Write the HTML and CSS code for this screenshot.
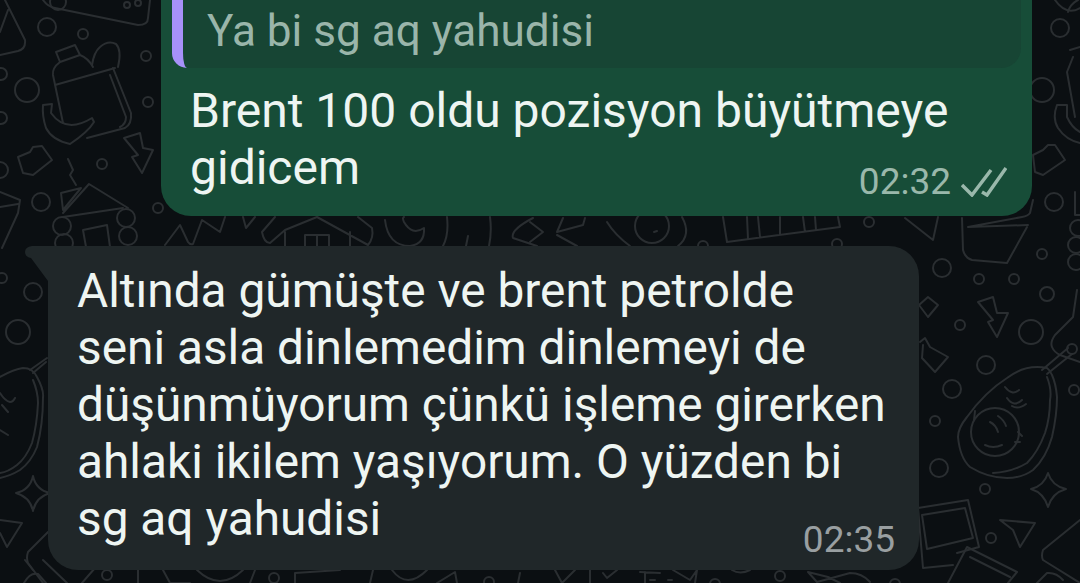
FILE: index.html

```html
<!DOCTYPE html>
<html lang="en">
  <head>
    <meta charset="UTF-8" />
    <title>Chat</title>
    <link rel="stylesheet" href="styles.css">
  </head>
  <body>
    <svg class="doodles" width="1080" height="583" viewBox="0 0 1080 583" fill="none">
      <g>
        <!-- small circles -->
        <circle cx="47" cy="27" r="9" /><circle cx="83" cy="34" r="5" /><circle cx="27" cy="90" r="12" />
        <circle cx="146" cy="56" r="5" /><circle cx="148" cy="102" r="5" /><circle cx="102" cy="164" r="5" />
        <circle cx="41" cy="202" r="9" /><circle cx="158" cy="208" r="5" /><circle cx="1" cy="118" r="6" />
        <circle cx="1" cy="74" r="6" /><circle cx="0" cy="170" r="8" /><circle cx="58" cy="2" r="8" />
        <circle cx="127" cy="5" r="3" /><circle cx="138" cy="3" r="3" />
        <circle cx="33" cy="292" r="9" /><circle cx="18" cy="332" r="12" /><circle cx="2" cy="278" r="5" />
        <circle cx="1060" cy="28" r="9" /><circle cx="1042" cy="90" r="12" /><circle cx="1054" cy="202" r="9" />
        <circle cx="869" cy="222" r="5" /><circle cx="942" cy="268" r="9" /><circle cx="1042" cy="254" r="5" />
        <circle cx="979" cy="279" r="5" /><circle cx="1014" cy="279" r="5" /><circle cx="837" cy="244" r="5" />
        <circle cx="703" cy="246" r="5" />
        <circle cx="960" cy="325" r="5" /><circle cx="1031" cy="332" r="12" /><circle cx="986" cy="365" r="9" />
        <circle cx="952" cy="389" r="9" /><circle cx="935" cy="421" r="5" /><circle cx="1074" cy="390" r="5" />
        <circle cx="939" cy="468" r="9" /><circle cx="985" cy="489" r="5" /><circle cx="991" cy="538" r="5" />
        <circle cx="1072" cy="349" r="5" /><circle cx="1047" cy="294" r="7" />
        <!-- top left shapes -->
        <path d="M5 0L25 40Q26 49 18 51L0 55M0 32L8 10" />
        <path d="M43 0Q48 7 55 8L138 25Q148 25 148 18L150 0" />
        <!-- bottle, bag, banana -->
        <path d="M56 52L75 45L80 55L60 62ZM60 62Q52 68 53 75L63 123M80 55Q88 58 93 67M55 85L115 68" />
        <path d="M92 65Q94 52 100 47Q108 40 116 44Q122 50 118 67" />
        <path d="M113 68L131 113Q132 124 125 128L87 138M110 75L126 117Q126 124 120 127" />
        <path d="M43 105L52 104L51 113Q66 134 92 118L94 122Q88 132 70 144Q52 140 46 128Q42 116 43 105Z" />
        <!-- box, lightning, squiggle -->
        <path d="M18 157L30 152L33 147L42 146L52 160L33 175L23 173Z" />
        <path d="M124 138L140 133L143 148L153 150L142 173L132 157L138 155Z" />
        <path d="M68 159L73 170L70 175L76 185" />
        <!-- log house -->
        <path d="M61 193L81 188L63 210ZM63 213L89 184L128 208M63 217L123 208M83 230L107 225L110 247M83 230L86 247" />
        <circle cx="62" cy="226" r="9" /><circle cx="126" cy="218" r="9" /><circle cx="128" cy="236" r="9" /><circle cx="64" cy="243" r="9" />
        <!-- bucket left -->
        <path d="M0 192L20 200L18 213L2 248M0 207L18 204" />
        <!-- avocado bottom left -->
        <path d="M30 370L47 358M33 373L46 362" />
        <path d="M0 377Q14 369 23 368Q33 368 37 377Q44 390 43 397Q43 425 37 447Q31 462 20 470Q10 476 0 478" />
        <path d="M33 380Q38 392 38 403Q37 425 32 443Q26 458 17 465Q8 472 0 473" />
        <path d="M0 393Q5 401 10 402Q13 402 15 398M2 405L8 412M0 430L8 435" />
        <path d="M33 476Q36 490 50 493Q36 497 33 511Q30 497 16 493Q30 490 33 476Z" />
        <path d="M0 520L22 523L7 547L0 533" />
        <path d="M48 532L28 552Q26 558 28 563L43 583" />
        <!-- right top -->
        <path d="M1070 50L1080 47M1073 57L1067 72L1075 117M1057 105L1067 105L1067 117Q1072 128 1080 132M1057 105Q1052 118 1058 128Q1066 140 1080 143" />
        <path d="M1033 155L1043 150L1048 145L1055 145L1065 160L1043 175L1035 172Z" />
        <path d="M1055 0Q1066 16 1080 8" />
        <path d="M1078 0Q1070 4 1068 12" />
        <!-- bucket right -->
        <path d="M962 218L963 250Q965 258 972 260L1007 263L1027 227M968 227L1028 225M1033 200L1030 213Q1028 216 1022 217L968 227" />
        <path d="M905 218L933 240L938 217" />
        <path d="M1075 192V215H1080" />
        <circle cx="1078" cy="228" r="8" /><circle cx="1076" cy="245" r="8" /><circle cx="1076" cy="262" r="8" />
        <!-- right middle -->
        <path d="M919 305L928 297L938 305L928 317Z" />
        <path d="M978 302L993 297L997 313L1008 313L997 337L988 322L993 320Z" />
        <path d="M920 342L925 338L930 347L948 357L935 372L922 358L923 345" />
        <path d="M1077 290L1073 317L1055 335Q1050 342 1052 347Q1054 352 1060 355L1080 362" />
        <!-- avocado right -->
        <path d="M1042 370L1068 348M1047 374L1072 354" />
        <path d="M1047 368Q1025 364 1007 378Q985 392 967 417Q958 428 958 437Q960 458 970 467Q988 478 1007 478Q1022 478 1033 470Q1046 458 1052 437Q1057 415 1057 397Q1056 384 1052 375Q1050 370 1047 368Z" />
        <path d="M1047 377Q1052 390 1050 400Q1050 418 1045 433Q1038 452 1027 463Q1012 472 993 473" />
        <path d="M1005 387Q1012 396 1019 390M1007 398Q1014 408 1022 400M1012 406Q1018 410 1026 404" />
        <circle cx="995" cy="432" r="24" />
        <path d="M975 411L974 420M1018 432L1022 436M1015 442L1020 442M990 422Q996 425 998 432M998 416Q1004 420 1006 426M985 445Q993 449 1002 445" />
        <path d="M1048 473Q1052 486 1066 489Q1052 493 1048 507Q1044 493 1031 489Q1044 486 1048 473Z" />
        <!-- frames and phone bottom right -->
        <path d="M918 508L968 500L979 547L957 553M918 508L923 568L953 565M922 515L965 508L973 538L927 549Z" />
        <path d="M948 583L967 547L1017 572L1008 583M970 557L1010 577" />
        <path d="M1000 520L1035 523L1020 547L1013 530Z" />
        <path d="M1080 520L1043 550Q1041 556 1043 560L1080 583M1037 583L1047 573Q1056 572 1063 580" />
        <!-- strip between bubbles -->
        <path d="M165 245L180 225L188 242Q190 245 193 244L202 220L220 232L225 217M243 217L246 228L255 217" />
        <path d="M275 217L262 232Q264 243 270 243L285 230L317 217L368 245Q374 238 372 228L358 217M285 232V246M350 232V246" />
        <path d="M305 246V235H329V246M317 235V246" />
        <path d="M385 220Q388 246 410 246Q425 244 424 228Q412 236 404 222Q402 218 404 217" />
        <path d="M447 217Q449 235 443 246M490 217Q492 232 489 246M468 236L466 246M533 218Q510 230 513 238L537 246" />
        <path d="M530 222L543 232L530 242M563 218L557 232L583 225L585 218M557 235L577 246" />
        <circle cx="652" cy="226" r="17" />
        <path d="M607 222Q615 235 630 246M682 217Q692 235 678 246M654 232L657 231" />
        <path d="M723 217L727 242L840 227L838 217M747 217L748 239M758 217L760 237M780 217V234M803 217L805 232M815 217L816 230" />
        <!-- strip under last bubble -->
        <path d="M43 560L67 583M24 583Q30 572 38 574L46 583M25 560L33 570" />
        <circle cx="107" cy="575" r="5" />
        <path d="M82 583L95 568M138 570V583M163 570L170 583L190 583M197 570Q220 592 243 570M255 570L250 583" />
        <circle cx="274" cy="578" r="5" />
        <path d="M295 583V573L340 570M373 570L370 583M392 570Q407 590 427 570M437 583L455 572L457 583M520 573L518 583" />
        <circle cx="489" cy="582" r="5" />
        <path d="M555 570L562 583L575 570M590 570V583M603 573L607 578L617 570" />
        <path d="M640 572L660 573M645 583V572M650 580H655M668 580H672M673 570L690 580L697 570L695 583" />
        <circle cx="715" cy="584" r="5" />
        <path d="M732 570Q740 575 750 570" />
        <circle cx="780" cy="576" r="5" /><circle cx="895" cy="584" r="5" />
        <path d="M808 572L817 582L850 573Q862 573 870 582M808 572L828 577L840 583" />
      </g>
    </svg>

    <div class="chat">
      <div class="bubble bubble-out">
        <div class="quote">
          <div class="quote-text">Ya bi sg aq yahudisi</div>
        </div>
        <div class="msg-text">Brent 100 oldu pozisyon büyütmeye<br />gidicem</div>
        <div class="meta">
          <span class="time time-out">02:32</span>
          <svg class="ticks" width="46" height="30" viewBox="0 0 46 30" fill="none">
            <path d="M1 18L11 28L30 3M21 25L26 28L45 1" />
          </svg>
        </div>
      </div>

      <div class="bubble bubble-in">
        <svg class="tail" width="24" height="40" viewBox="0 0 24 40">
          <path d="M24 0H8Q1 1 1 6Q1 11 7 12L24 35Z" />
        </svg>
        <div class="msg-text">Altında gümüşte ve brent petrolde<br />seni asla dinlemedim dinlemeyi de<br />düşünmüyorum çünkü işleme girerken<br />ahlaki ikilem yaşıyorum. O yüzden bi<br />sg aq yahudisi</div>
        <div class="meta">
          <span class="time time-in">02:35</span>
        </div>
      </div>
    </div>
  </body>
</html>
```

FILE: styles.css

```css
body {
  margin: 0;
  width: 1080px;
  height: 583px;
  overflow: hidden;
  position: relative;
  background-color: #0b0f12;
  font-family: Roboto, sans-serif;
}

/* wallpaper */
.doodles {
  position: absolute;
  left: 0;
  top: 0;
}

.doodles g {
  stroke: #2a2e31;
  stroke-width: 2;
  stroke-linejoin: round;
  stroke-linecap: round;
}

.chat {
  position: relative;
  display: flex;
  flex-direction: column;
  gap: 30px;
}

.bubble {
  position: relative;
  width: 871px;
  box-sizing: border-box;
}

.bubble-out {
  margin-left: 161px;
  height: 216px;
  padding: 0 11px;
  background-color: #174d38;
  border-radius: 0 0 30px 30px;
}

.bubble-in {
  margin-left: 48px;
  height: 324px;
  padding: 17px 0 0 29px;
  background-color: #202729;
  border-radius: 0 30px 30px 30px;
}

.tail {
  position: absolute;
  left: -24px;
  top: 0;
  fill: #202729;
}

.quote {
  height: 68px;
  box-sizing: border-box;
  padding: 7px 0 0 24px;
  background-color: #174534;
  border-left: 11px solid #a791f9;
  border-radius: 0 0 20px 15px;
}

.quote-text {
  font-size: 44.1px;
  line-height: 48px;
  color: #9ab5aa;
}

.msg-text {
  font-size: 48px;
  line-height: 57px;
  white-space: nowrap;
  color: #eef5f2;
}

.bubble-out .msg-text {
  padding: 14px 0 0 18px;
}

.bubble-in .msg-text {
  font-size: 47.8px;
}

.meta {
  position: absolute;
  display: flex;
  align-items: center;
  gap: 10px;
}

.bubble-out .meta {
  right: 25px;
  bottom: 14px;
}

.bubble-in .meta {
  right: 24px;
  bottom: 10px;
}

.time {
  font-size: 37px;
  line-height: 40px;
}

.time-out {
  color: #9ab8ab;
}

.time-in {
  color: #999fa1;
}

.ticks path {
  stroke: #9ab8ab;
  stroke-width: 3.5;
}
```
